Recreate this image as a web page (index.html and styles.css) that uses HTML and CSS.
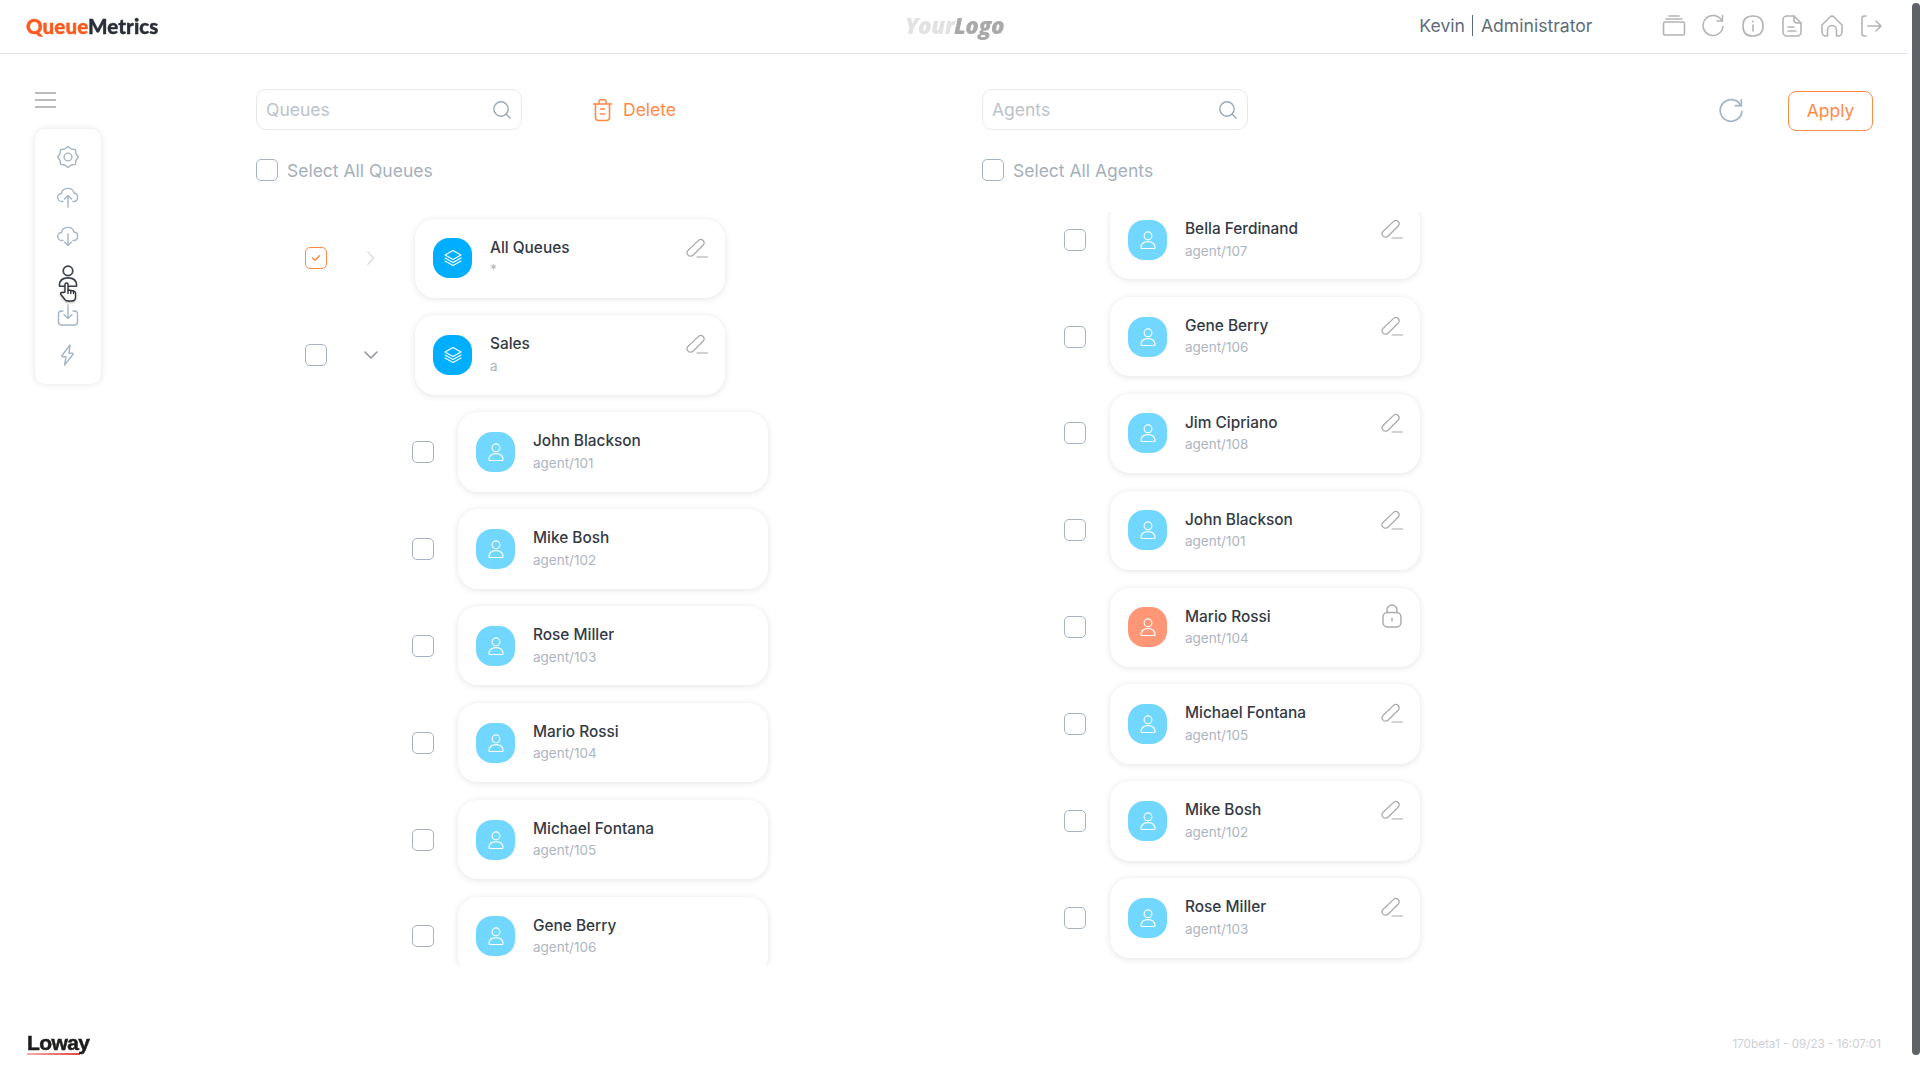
FILE: index.html
```html
<!doctype html>
<html>
<head>
   <title>QueueMetrics</title>
   <meta charset="utf-8">
   <link rel="stylesheet" href="styles.css">
</head>
<body>

   <!-- icon sprite -->
   <svg class="sprite" xmlns="http://www.w3.org/2000/svg">
      <symbol id="i-search" viewBox="0 0 20 20"><circle cx="9" cy="9" r="7.2"/><path d="M14.3 14.3 18 18"/></symbol>
      <symbol id="i-edit" viewBox="0 0 22 20"><path d="M2.2 12.2 12.6 2.4a3.3 3.3 0 0 1 4.7 4.6L7 17.2a3.4 3.4 0 0 1-4.8-5z"/><path d="M11 19h10.5"/></symbol>
      <symbol id="i-lock" viewBox="0 0 20 24"><rect x="1" y="8.5" width="18" height="14.5" rx="4.5"/><path d="M5 8.5V6a5 5 0 0 1 10 0v2.5"/><path d="M10 14.5v2.5"/></symbol>
      <symbol id="i-user" viewBox="0 0 16 18"><circle cx="8" cy="4.8" r="3.9"/><path d="M1 16.8c0-4.2 3-6.2 7-6.2s7 2 7 6.2c0 .5-.3.7-.7.7H1.700c-.4 0-.7-.2-.7-.7z"/></symbol>
      <symbol id="i-stack" viewBox="0 0 18 18"><path d="M9 1.500 17 6 9 10.500 1 6z"/><path d="M1 9l8 4.500L17 9"/><path d="M1 12l8 4.500 8-4.500"/></symbol>
      <symbol id="i-reload" viewBox="0 0 24 24"><path d="M21 7A10 10 0 1 0 22 12.500"/><path d="M21.500 1.500V7H16"/></symbol>
      <symbol id="i-trash" viewBox="0 0 20 24"><path d="M1 6h18"/><path d="M6.500 5.500V3.300c0-.9.7-1.600 1.600-1.600h3.800c.9 0 1.600.7 1.600 1.600v2.200"/><path d="M3 6v13.500c0 1.700 1.200 3 3 3h8c1.800 0 3-1.300 3-3V6"/><path d="M8 11h4M8 16h4"/></symbol>
      <symbol id="i-gear" viewBox="0 0 22 22"><path d="M11 .5 14.300 3.050 18.420 3.580 18.950 7.710 21.500 11 18.950 14.290 18.420 18.420 14.290 18.950 11 21.500 7.710 18.950 3.580 18.420 3.050 14.290 .5 11 3.050 7.710 3.580 3.580 7.710 3.050z"/><circle cx="11" cy="11" r="3.900"/></symbol>
      <symbol id="i-cloud-up" viewBox="0 0 22 22"><path d="M6 15.500H5a4 4 0 0 1-.6-8A6.500 6.500 0 0 1 17 7a4.300 4.300 0 0 1 0 8.500h-1"/><path d="M11 21V9.500M7.500 13 11 9.500l3.500 3.500"/></symbol>
      <symbol id="i-cloud-down" viewBox="0 0 22 22"><path d="M6 15.500H5a4 4 0 0 1-.6-8A6.500 6.500 0 0 1 17 7a4.300 4.300 0 0 1 0 8.500h-1"/><path d="M11 9v11.500M7.500 17 11 20.500 14.500 17"/></symbol>
      <symbol id="i-import" viewBox="0 0 22 22"><path d="M6 7H4.500A3 3 0 0 0 1.500 10v8a3 3 0 0 0 3 3h13a3 3 0 0 0 3-3v-8a3 3 0 0 0-3-3H16"/><path d="M11 1v13M7 10.500l4 4 4-4"/></symbol>
      <symbol id="i-bolt" viewBox="0 0 22 22"><path d="M13 1 5 11.500c-.4.6-.1 1.200.6 1.200H9l-1.500 8.300 8.400-10.500c.4-.6.1-1.200-.6-1.200H12z"/></symbol>
      <symbol id="i-tray" viewBox="0 0 24 24"><rect x="1.500" y="8" width="21" height="13" rx="1.500"/><path d="M4 5h16M7 2h10"/></symbol>
      <symbol id="i-info" viewBox="0 0 24 24"><path d="M12 2c7 0 10 3 10 10s-3 10-10 10S2 19 2 12 5 2 12 2z"/><path d="M12 11v6M12 7v1"/></symbol>
      <symbol id="i-doc" viewBox="0 0 24 24"><path d="M14 2H7a4 4 0 0 0-4 4v12a4 4 0 0 0 4 4h10a4 4 0 0 0 4-4V9z"/><path d="M14 2v4a3 3 0 0 0 3 3h4"/><path d="M8 13h6M8 17h8"/></symbol>
      <symbol id="i-home" viewBox="0 0 24 24"><path d="M2 11 10 3c1.200-1.200 2.800-1.200 4 0l8 8v7a4 4 0 0 1-4 4h-1.500v-6a4.500 4.500 0 0 0-9 0v6H6a4 4 0 0 1-4-4z"/></symbol>
      <symbol id="i-logout" viewBox="0 0 24 24"><path d="M7 2H5.500C4 2 3 3 3 4.500v15C3 21 4 22 5.500 22H7"/><path d="M9 12h13M17 7l5 5-5 5"/></symbol>
   </svg>

   <div class="page">

      <header class="topbar">
         <div class="brand"><span class="brand-a">Queue</span>Metrics</div>
         <div class="yourlogo"><span class="yl-a">Your</span>Logo</div>
         <div class="topright">
            <div class="whoami"><span>Kevin</span><span class="whoami-sep">Administrator</span></div>
            <div class="topicons">
               <svg class="topicon"><use href="#i-tray"/></svg>
               <svg class="topicon"><use href="#i-reload"/></svg>
               <svg class="topicon"><use href="#i-info"/></svg>
               <svg class="topicon"><use href="#i-doc"/></svg>
               <svg class="topicon"><use href="#i-home"/></svg>
               <svg class="topicon"><use href="#i-logout"/></svg>
            </div>
         </div>
      </header>

      <main class="content">

         <aside class="side">
            <div class="burger"><i></i><i></i><i></i></div>
            <nav class="sidecard">
               <svg class="sideicon"><use href="#i-gear"/></svg>
               <svg class="sideicon"><use href="#i-cloud-up"/></svg>
               <svg class="sideicon"><use href="#i-cloud-down"/></svg>
               <div class="sideactive">
                  <svg class="sideicon sideicon-on"><use href="#i-user"/></svg>
                  <svg class="hand" viewBox="0 0 18 20"><path d="M6 10V2.500a1.500 1.500 0 0 1 3 0V8l5.500 1c1.300.2 2 1 2 2.300V15c0 2.500-1.500 4-4 4H9c-1.500 0-2.500-.6-3.300-1.700L2 12.500c-1-1.500.8-3 2.200-1.800z"/><path d="M9 8v3.500M11.800 8.500v3M14.500 9v2.500"/></svg>
               </div>
               <svg class="sideicon"><use href="#i-import"/></svg>
               <svg class="sideicon"><use href="#i-bolt"/></svg>
            </nav>
         </aside>

         <section class="col col-queues">
            <div class="toolbar">
               <div class="search"><span>Queues</span><svg class="search-icon"><use href="#i-search"/></svg></div>
               <div class="delete"><svg class="delete-icon"><use href="#i-trash"/></svg>Delete</div>
            </div>
            <label class="selectall"><span class="check"></span>Select All Queues</label>

            <div class="list list-queues">
               <div class="row row-q">
                  <span class="check check-on"><svg viewBox="0 0 10 8"><path d="M1.500 4 4 6.300 8.500 1.800"/></svg></span>
                  <span class="chev chev-right"><svg viewBox="0 0 12 20"><path d="M2 2l7 8-7 8"/></svg></span>
                  <div class="card">
                     <div class="avatar avatar-q"><svg><use href="#i-stack"/></svg></div>
                     <div class="info"><div class="name">All Queues</div><div class="sub">*</div></div>
                     <svg class="action"><use href="#i-edit"/></svg>
                  </div>
               </div>
               <div class="row row-q">
                  <span class="check"></span>
                  <span class="chev"><svg viewBox="0 0 14 8"><path d="M1 1l6 6 6-6"/></svg></span>
                  <div class="card">
                     <div class="avatar avatar-q"><svg><use href="#i-stack"/></svg></div>
                     <div class="info"><div class="name">Sales</div><div class="sub">a</div></div>
                     <svg class="action"><use href="#i-edit"/></svg>
                  </div>
               </div>
               <div class="row row-child">
                  <span class="check"></span>
                  <div class="card">
                     <div class="avatar"><svg><use href="#i-user"/></svg></div>
                     <div class="info"><div class="name">John Blackson</div><div class="sub">agent/101</div></div>
                  </div>
               </div>
               <div class="row row-child">
                  <span class="check"></span>
                  <div class="card">
                     <div class="avatar"><svg><use href="#i-user"/></svg></div>
                     <div class="info"><div class="name">Mike Bosh</div><div class="sub">agent/102</div></div>
                  </div>
               </div>
               <div class="row row-child">
                  <span class="check"></span>
                  <div class="card">
                     <div class="avatar"><svg><use href="#i-user"/></svg></div>
                     <div class="info"><div class="name">Rose Miller</div><div class="sub">agent/103</div></div>
                  </div>
               </div>
               <div class="row row-child">
                  <span class="check"></span>
                  <div class="card">
                     <div class="avatar"><svg><use href="#i-user"/></svg></div>
                     <div class="info"><div class="name">Mario Rossi</div><div class="sub">agent/104</div></div>
                  </div>
               </div>
               <div class="row row-child">
                  <span class="check"></span>
                  <div class="card">
                     <div class="avatar"><svg><use href="#i-user"/></svg></div>
                     <div class="info"><div class="name">Michael Fontana</div><div class="sub">agent/105</div></div>
                  </div>
               </div>
               <div class="row row-child">
                  <span class="check"></span>
                  <div class="card">
                     <div class="avatar"><svg><use href="#i-user"/></svg></div>
                     <div class="info"><div class="name">Gene Berry</div><div class="sub">agent/106</div></div>
                  </div>
               </div>
            </div>
         </section>

         <section class="col col-agents">
            <div class="toolbar toolbar-agents">
               <div class="search"><span>Agents</span><svg class="search-icon"><use href="#i-search"/></svg></div>
               <div class="actions">
                  <svg class="reload"><use href="#i-reload"/></svg>
                  <button class="apply">Apply</button>
               </div>
            </div>
            <label class="selectall"><span class="check"></span>Select All Agents</label>

            <div class="list list-agents">
               <div class="row row-agent">
                  <span class="check"></span>
                  <div class="card">
                     <div class="avatar"><svg><use href="#i-user"/></svg></div>
                     <div class="info"><div class="name">Bella Ferdinand</div><div class="sub">agent/107</div></div>
                     <svg class="action"><use href="#i-edit"/></svg>
                  </div>
               </div>
               <div class="row row-agent">
                  <span class="check"></span>
                  <div class="card">
                     <div class="avatar"><svg><use href="#i-user"/></svg></div>
                     <div class="info"><div class="name">Gene Berry</div><div class="sub">agent/106</div></div>
                     <svg class="action"><use href="#i-edit"/></svg>
                  </div>
               </div>
               <div class="row row-agent">
                  <span class="check"></span>
                  <div class="card">
                     <div class="avatar"><svg><use href="#i-user"/></svg></div>
                     <div class="info"><div class="name">Jim Cipriano</div><div class="sub">agent/108</div></div>
                     <svg class="action"><use href="#i-edit"/></svg>
                  </div>
               </div>
               <div class="row row-agent">
                  <span class="check"></span>
                  <div class="card">
                     <div class="avatar"><svg><use href="#i-user"/></svg></div>
                     <div class="info"><div class="name">John Blackson</div><div class="sub">agent/101</div></div>
                     <svg class="action"><use href="#i-edit"/></svg>
                  </div>
               </div>
               <div class="row row-agent">
                  <span class="check"></span>
                  <div class="card">
                     <div class="avatar avatar-locked"><svg><use href="#i-user"/></svg></div>
                     <div class="info"><div class="name">Mario Rossi</div><div class="sub">agent/104</div></div>
                     <svg class="action action-lock"><use href="#i-lock"/></svg>
                  </div>
               </div>
               <div class="row row-agent">
                  <span class="check"></span>
                  <div class="card">
                     <div class="avatar"><svg><use href="#i-user"/></svg></div>
                     <div class="info"><div class="name">Michael Fontana</div><div class="sub">agent/105</div></div>
                     <svg class="action"><use href="#i-edit"/></svg>
                  </div>
               </div>
               <div class="row row-agent">
                  <span class="check"></span>
                  <div class="card">
                     <div class="avatar"><svg><use href="#i-user"/></svg></div>
                     <div class="info"><div class="name">Mike Bosh</div><div class="sub">agent/102</div></div>
                     <svg class="action"><use href="#i-edit"/></svg>
                  </div>
               </div>
               <div class="row row-agent">
                  <span class="check"></span>
                  <div class="card">
                     <div class="avatar"><svg><use href="#i-user"/></svg></div>
                     <div class="info"><div class="name">Rose Miller</div><div class="sub">agent/103</div></div>
                     <svg class="action"><use href="#i-edit"/></svg>
                  </div>
               </div>
            </div>
         </section>

      </main>

      <footer class="foot">
         <div class="loway">Loway</div>
         <small class="version">170beta1 - 09/23 - 16:07:01</small>
      </footer>

   </div>

   <div class="scrollthumb"></div>

</body>
</html>
```

FILE: styles.css
```css
*{
   box-sizing: border-box;
}

html, body{
   margin: 0;
   height: 100%;
   overflow: hidden;
   background: #fff;
}

body{
   font-family: Inter, "Liberation Sans", sans-serif;
   color: #333a45;
}

.sprite{
   display: none;
}

svg{
   fill: none;
   stroke-linecap: round;
   stroke-linejoin: round;
}

.page{
   width: 1908px;
   height: 1080px;
   display: flex;
   flex-direction: column;
}

/* top bar */
.topbar{
   height: 54px;
   flex: none;
   display: grid;
   grid-template-columns: 1fr auto 1fr;
   align-items: center;
   padding: 0 25px 2px 26px;
   border-bottom: 1px solid #e4e5e7;
}

.brand{
   font-family: Lato, sans-serif;
   font-weight: 900;
   font-size: 20.5px;
   letter-spacing: .1px;
   color: #2a2e38;
   -webkit-text-stroke: .4px;
   filter: blur(.3px);
}

.brand-a{
   color: #ff5a1f;
}

.yourlogo{
   font-family: "Open Sans", sans-serif;
   font-style: italic;
   font-weight: 800;
   font-size: 22.5px;
   letter-spacing: -.5px;
   color: #a9a9a9;
   filter: blur(.7px);
}

.yl-a{
   color: #e2e2e2;
}

.topright{
   display: flex;
   justify-content: flex-end;
   align-items: center;
}

.whoami{
   display: flex;
   align-items: center;
   font-size: 17.6px;
   color: #5f6b7c;
   margin-right: 69px;
}

.whoami-sep{
   margin-left: 7px;
   padding-left: 8px;
   border-left: 1px solid #5f6b7c;
   line-height: 21px;
}

.topicons{
   display: flex;
   gap: 15.5px;
}

.topicon{
   width: 24px;
   height: 24px;
   stroke: #b4b4b4;
   stroke-width: 1.6;
}

/* main area */
.content{
   flex: 1;
   min-height: 0;
   display: flex;
}

.side{
   width: 256px;
   flex: none;
   padding: 38px 0 0 35px;
}

.burger{
   display: flex;
   flex-direction: column;
   gap: 5px;
   width: 21px;
   margin-bottom: 21px;
}

.burger i{
   display: block;
   height: 2px;
   background: #b9bbbe;
}

.sidecard{
   width: 66px;
   height: 255px;
   padding-top: 17px;
   display: flex;
   flex-direction: column;
   align-items: center;
   gap: 17.5px;
   background: #fff;
   border-radius: 10px;
   box-shadow: 0 0 6px rgba(40,50,70,.13);
}

.sideicon{
   width: 22px;
   height: 22px;
   flex: none;
   stroke: #a5b5c4;
   stroke-width: 1.4;
   display: block;
}

.sideactive{
   position: relative;
   width: 22px;
   height: 22px;
}

.sideicon-on{
   stroke: #3d4450;
}

.hand{
   position: absolute;
   left: 2px;
   top: 17px;
   width: 18px;
   height: 20px;
   fill: #fff;
   stroke: #2f333b;
   stroke-width: 1.4;
   filter: drop-shadow(0 1px 1px rgba(0,0,0,.3));
}

/* columns */
.col{
   padding-top: 35px;
   display: flex;
   flex-direction: column;
}

.col-queues{
   width: 726px;
   flex: none;
}

.col-agents{
   flex: 1;
   min-width: 0;
}

.toolbar{
   display: flex;
   align-items: center;
   height: 41px;
}

.search{
   width: 266px;
   height: 41px;
   flex: none;
   display: flex;
   align-items: center;
   justify-content: space-between;
   padding: 0 9px 0 9px;
   border: 1px solid #e6e9eb;
   border-radius: 10px;
   font-size: 17.5px;
   color: #bcc3ca;
}

.search-icon{
   width: 20px;
   height: 20px;
   stroke: #9aa8b5;
   stroke-width: 1.4;
}

.delete{
   margin-left: 70px;
   display: flex;
   align-items: center;
   gap: 10px;
   font-size: 17.5px;
   color: #ff8a47;
}

.delete-icon{
   width: 21px;
   height: 24px;
   stroke: #ff8a47;
   stroke-width: 1.6;
}

.actions{
   margin-left: auto;
   padding: 2px 35px 0 0;
   display: flex;
   align-items: center;
   gap: 44px;
}

.reload{
   width: 26px;
   height: 26px;
   stroke: #a5b5c4;
   stroke-width: 1.6;
}

.apply{
   width: 85px;
   height: 40px;
   background: #fff;
   border: 1px solid #ff8a47;
   border-radius: 8px;
   font-family: inherit;
   font-size: 17.5px;
   color: #ff8a47;
}

.selectall{
   display: flex;
   align-items: center;
   gap: 9px;
   margin-top: 29px;
   font-size: 17.5px;
   color: #a4b0bc;
}

.check{
   width: 22px;
   height: 22px;
   flex: none;
   display: flex;
   align-items: center;
   justify-content: center;
   border: 1px solid #a3b3c1;
   border-radius: 5px;
   background: #fff;
}

.check-on{
   border-color: #ff8a47;
}

.check-on svg{
   width: 10px;
   height: 8px;
   stroke: #ff8a47;
   stroke-width: 1.5;
}

/* lists */
.list{
   margin-top: 29px;
   display: flex;
   flex-direction: column;
   gap: 17.5px;
   overflow: hidden;
}

.list-queues{
   height: 755px;
   padding-top: 8.5px;
   margin-left: -8px;
   padding-left: 8px;
   margin-right: -60px;
}

.list-agents{
   height: 758px;
   margin-top: 31px;
}

.list-agents .row:first-child{
   margin-top: -12px;
}

.row{
   display: flex;
   align-items: center;
   flex: none;
}

.row-q{
   margin-left: 49px;
}

.row-child{
   margin-left: 156px;
   gap: 24px;
}

.row-agent{
   margin-left: 82px;
   gap: 24px;
}

.chev{
   width: 88px;
   display: flex;
   justify-content: center;
}

.chev svg{
   width: 14px;
   height: 8px;
   stroke: #8d9299;
   stroke-width: 1.5;
}

.chev-right svg{
   width: 10px;
   height: 16px;
   stroke: #d4d8dc;
   stroke-width: 1.5;
}

.card{
   position: relative;
   width: 310px;
   height: 79.4px;
   flex: none;
   display: flex;
   align-items: flex-start;
   padding: 0 17px 0 18px;
   background: #fff;
   border-radius: 20px;
   box-shadow: 0 1px 6px rgba(40,50,70,.13);
}

.avatar{
   width: 39px;
   height: 40px;
   flex: none;
   align-self: center;
   display: flex;
   align-items: center;
   justify-content: center;
   border-radius: 16px;
   background: #72d7ff;
}

.avatar svg{
   width: 16px;
   height: 18px;
   stroke: #fff;
   stroke-width: 1.1;
}

.avatar-q{
   background: #00aeff;
}

.avatar-q svg{
   width: 18px;
   height: 18px;
}

.avatar-locked{
   background: #ff9777;
}

.info{
   margin-left: 18px;
   padding-top: 19px;
}

.name{
   font-size: 15.4px;
   font-weight: 500;
   line-height: 20px;
}

.sub{
   margin-top: 3.5px;
   font-size: 13.5px;
   line-height: 16px;
   color: #adb5bf;
}

.action{
   width: 22px;
   height: 20px;
   margin: 19px 0 0 auto;
   stroke: #a8a8a8;
   stroke-width: 1.2;
}

.action-lock{
   width: 20px;
   height: 24px;
   margin-right: 1px;
   margin-top: 16px;
   stroke-width: 1.4;
}

/* footer */
.foot{
   height: 80px;
   flex: none;
   display: flex;
   align-items: center;
   justify-content: space-between;
   padding: 8px 27px 0;
}

.loway{
   font-family: "Liberation Sans", sans-serif;
   font-weight: 700;
   font-size: 21px;
   letter-spacing: -.6px;
   line-height: 20px;
   color: #1c1c1c;
   -webkit-text-stroke: .5px;
   filter: blur(.3px);
   border-bottom: 2px solid #e8423f;
   border-image: linear-gradient(to right, #f3b0ae, #e8423f 85%, transparent 85%) 1;
}

.version{
   font-size: 11.7px;
   color: #cdd0d4;
}

/* window scrollbar */
.scrollthumb{
   position: absolute;
   top: 3px;
   right: 0;
   width: 8px;
   height: 1052px;
   background: #5f6368;
   border-radius: 4px;
}
```
